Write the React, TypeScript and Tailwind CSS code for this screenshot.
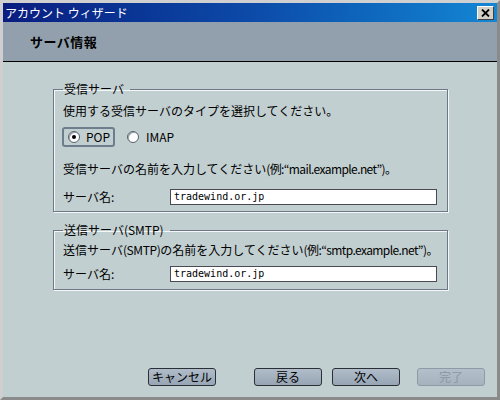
import React from "react";

const jp = { fontFamily: '"Noto Sans CJK JP", "Noto Sans", sans-serif' };

function Radio({ checked }: { checked?: boolean }) {
  return (
    <span className="w-[12px] h-[12px] rounded-full bg-white border border-[#55606b] shadow-[inset_1px_1px_0_#9aa4ae] flex items-center justify-center">
      {checked && <span className="w-[4px] h-[4px] rounded-full bg-black" />}
    </span>
  );
}

function Btn({ label, disabled }: { label: string; disabled?: boolean }) {
  return (
    <div
      className={
        "w-[68px] h-[18px] rounded-[3px] flex items-center justify-center text-[12px] leading-none " +
        (disabled
          ? "border border-[#8f9aa6] bg-gradient-to-b from-[#b3bfcb] to-[#a6b2be] text-[#8b97a3]"
          : "border border-[#2a2f35] bg-gradient-to-b from-[#b0bcc9] to-[#97a5b4] text-black")
      }
    >
      {label}
    </div>
  );
}

export default function App() {
  return (
    <div
      className="w-[500px] h-[400px] flex flex-col bg-[#c2cfd1] border-t-[3px] border-l-[3px] border-t-[#d0d0d0] border-l-[#cfcfcf] border-r-[3px] border-b-[3px] border-r-[#8a8a8a] border-b-[#8a8a8a] overflow-hidden"
      style={jp}
    >
      {/* title bar */}
      <div className="h-[19px] flex items-center justify-between bg-gradient-to-r from-[#0a1c80] via-[#0d4aa8] to-[#1586d4] pl-[2px] pr-[3px]">
        <span className="text-white text-[12px] leading-none">アカウント ウィザード</span>
        <div className="w-[17px] h-[14px] bg-[#d4d0c8] border border-t-white border-l-white border-r-[#404040] border-b-[#404040] flex items-center justify-center">
          <svg width="9" height="8" viewBox="0 0 9 8">
            <path d="M1 0.5 L8 7.5 M8 0.5 L1 7.5" stroke="#000" strokeWidth="1.8" />
          </svg>
        </div>
      </div>
      {/* header */}
      <div className="h-[40px] bg-[#92a0ae] border-b border-black flex items-center pl-[27px]">
        <span className="text-[13px] font-bold text-black tracking-[0.5px]">サーバ情報</span>
      </div>
      {/* body */}
      <div className="flex-1 flex flex-col pl-[50px] pt-[20px] text-[12px] text-black">
        <fieldset className="w-[395px] border border-[#6e7785] shadow-[1px_1px_0_#f4f7f7,inset_1px_1px_0_#f4f7f7] pl-[9px] pr-[9px] pt-[7px] pb-[6px]">
          <legend className="pr-[6px] pl-[1px] leading-[14px]">受信サーバ</legend>
          <div className="leading-[16px] whitespace-nowrap">使用する受信サーバのタイプを選択してください。</div>
          <div className="flex items-center mt-[8px] h-[20px]">
            <div className="ml-[-1px] w-[53px] h-[20px] rounded-[3px] border-2 border-[#6d7d8c] flex items-center pl-[4px] gap-[6px]">
              <Radio checked />
              <span className="leading-none">POP</span>
            </div>
            <div className="ml-[12px] flex items-center gap-[7px]">
              <Radio />
              <span className="leading-none">IMAP</span>
            </div>
          </div>
          <div className="leading-[16px] mt-[14px] whitespace-nowrap">
            受信サーバの名前を入力してください<span className="tracking-[-0.6px]">(例:“mail.example.net”)</span>。
          </div>
          <div className="flex items-center mt-[12px]">
            <span className="w-[107px] leading-[16px]">サーバ名:</span>
            <div
              className="w-[267px] h-[16px] bg-white border border-[#4a4a55] flex items-center pl-[3px] text-[10px] leading-none"
              style={{ fontFamily: '"DejaVu Sans Mono", monospace' }}
            >
              tradewind.or.jp
            </div>
          </div>
        </fieldset>
        <fieldset className="w-[395px] mt-[11px] border border-[#6e7785] shadow-[1px_1px_0_#f4f7f7,inset_1px_1px_0_#f4f7f7] pl-[9px] pr-[9px] pt-[5px] pb-[7px]">
          <legend className="pr-[6px] pl-[1px] leading-[14px]">送信サーバ(SMTP)</legend>
          <div className="leading-[16px] whitespace-nowrap">
            送信サーバ<span className="tracking-[-0.4px]">(SMTP)</span>の名前を入力してください<span className="tracking-[-0.6px]">(例:“smtp.example.net”)</span>。
          </div>
          <div className="flex items-center mt-[8px]">
            <span className="w-[107px] leading-[16px]">サーバ名:</span>
            <div
              className="w-[267px] h-[16px] bg-white border border-[#4a4a55] flex items-center pl-[3px] text-[10px] leading-none"
              style={{ fontFamily: '"DejaVu Sans Mono", monospace' }}
            >
              tradewind.or.jp
            </div>
          </div>
        </fieldset>
        <div className="flex-1" />
        <div className="flex items-center pl-[95px] pb-[11px]">
          <Btn label="キャンセル" />
          <div className="ml-[38px]"><Btn label="戻る" /></div>
          <div className="ml-[10px]"><Btn label="次へ" /></div>
          <div className="ml-[17px]"><Btn label="完了" disabled /></div>
        </div>
      </div>
    </div>
  );
}
